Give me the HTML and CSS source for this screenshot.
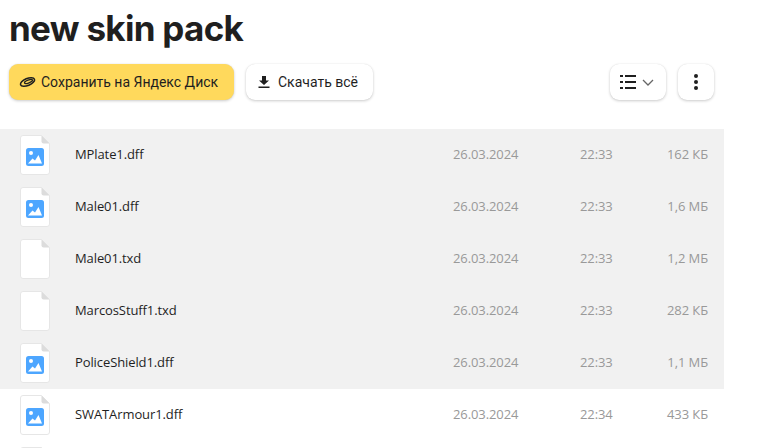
FILE: index.html
```html
<!DOCTYPE html>
<html lang="ru">
<head>
<meta charset="utf-8">
<title>new skin pack</title>
<link rel="stylesheet" href="styles.css">
</head>
<body>
<svg class="defs" width="0" height="0" aria-hidden="true">
  <symbol id="sheet" viewBox="0 0 30 40">
    <path d="M3 .5h18.500L29.500 8.500V37a2.500 2.500 0 0 1-2.500 2.500H3A2.500 2.500 0 0 1 .5 37V3A2.500 2.500 0 0 1 3 .5z" fill="#fff" stroke="#e6e6e6"/>
    <path d="M21.500 .5l8 8h-6a2 2 0 0 1-2-2z" fill="#dcdcdc"/>
  </symbol>
  <symbol id="pic" viewBox="0 0 30 40">
    <use href="#sheet" width="30" height="40"/>
    <rect x="6" y="13" width="18" height="18" rx="2.500" fill="#4da6ff"/>
    <circle cx="11" cy="18" r="2" fill="#fff"/>
    <path d="M8 28.500l4.500-5 2.500 2 3.500-5.500 3.500 8.500z" fill="#fff"/>
  </symbol>
</svg>
<header class="head">
  <h1 class="title">new skin pack</h1>
  <div class="toolbar">
    <button class="btn btn-save">
      <svg class="ico-disk" width="17" height="12" viewBox="0 0 17 12"><g fill="none" stroke="#1f1f1f"><ellipse cx="8.500" cy="6" rx="7.500" ry="3.500" transform="rotate(-22 8.500 6)" stroke-width="1.600"/><ellipse cx="9.500" cy="5.500" rx="4.200" ry="1.400" transform="rotate(-22 9.500 5.500)" stroke-width="1.400"/></g></svg>
      <span>Сохранить на Яндекс Диск</span>
    </button>
    <button class="btn btn-dl">
      <svg width="12" height="12" viewBox="0 0 12 12"><path d="M4 0h4v4.500h3L6 9 1 4.500h3zM0.500 10.500h11V12H.5z" fill="#1f1f1f"/></svg>
      <span>Скачать всё</span>
    </button>
    <div class="spacer"></div>
    <button class="btn btn-view">
      <svg width="16" height="14" viewBox="0 0 16 14"><path d="M0 0h3v2H0zM5 0h11v2H5zM0 6h3v2H0zM5 6h11v2H5zM0 12h3v2H0zM5 12h11v2H5z" fill="#1f1f1f"/></svg>
      <svg width="12" height="7" viewBox="0 0 12 7"><path d="M1 1l5 5 5-5" fill="none" stroke="#666" stroke-width="1.300"/></svg>
    </button>
    <button class="btn btn-more">
      <svg width="4" height="16" viewBox="0 0 4 16"><circle cx="2" cy="2" r="2" fill="#1f1f1f"/><circle cx="2" cy="8" r="2" fill="#1f1f1f"/><circle cx="2" cy="14" r="2" fill="#1f1f1f"/></svg>
    </button>
  </div>
</header>
<main class="list">
  <div class="row sel"><svg class="ficon"><use href="#pic"/></svg><span class="name">MPlate1.dff</span><span class="date">26.03.2024</span><span class="time">22:33</span><span class="size">162 КБ</span></div>
  <div class="row sel"><svg class="ficon"><use href="#pic"/></svg><span class="name">Male01.dff</span><span class="date">26.03.2024</span><span class="time">22:33</span><span class="size">1,6 МБ</span></div>
  <div class="row sel"><svg class="ficon"><use href="#sheet" width="30" height="40"/></svg><span class="name">Male01.txd</span><span class="date">26.03.2024</span><span class="time">22:33</span><span class="size">1,2 МБ</span></div>
  <div class="row sel"><svg class="ficon"><use href="#sheet" width="30" height="40"/></svg><span class="name">MarcosStuff1.txd</span><span class="date">26.03.2024</span><span class="time">22:33</span><span class="size">282 КБ</span></div>
  <div class="row sel"><svg class="ficon"><use href="#pic"/></svg><span class="name">PoliceShield1.dff</span><span class="date">26.03.2024</span><span class="time">22:33</span><span class="size">1,1 МБ</span></div>
  <div class="row"><svg class="ficon"><use href="#pic"/></svg><span class="name">SWATArmour1.dff</span><span class="date">26.03.2024</span><span class="time">22:34</span><span class="size">433 КБ</span></div>
  <div class="row"><svg class="ficon"><use href="#sheet" width="30" height="40"/></svg></div>
</main>
</body>
</html>
```
FILE: styles.css
```css
html, body { margin: 0; height: 448px; overflow: hidden; background: #fff; }
body { font-family: "Open Sans", Roboto, sans-serif; color: #1f1f1f; }
.defs { position: absolute; }
.head { width: 724px; }
.title { margin: 0; padding: 6px 0 0 9px; height: 58px; box-sizing: border-box; font-family: Inter, sans-serif; font-size: 35px; line-height: 44px; font-weight: 700; letter-spacing: -0.7px; }
.toolbar { display: flex; gap: 12px; padding: 6px 10px 0 9px; height: 71px; box-sizing: border-box; align-items: flex-start; }
.spacer { flex: 1; }
.btn { display: flex; align-items: center; height: 36px; border: 0; border-radius: 9px; background: #fff; box-shadow: 0 1px 3px rgba(0,0,0,.2), 0 0 1px rgba(0,0,0,.1); font: 14px/18px Roboto, sans-serif; color: #1f1f1f; padding: 0; }
.btn-save { width: 225px; background: #ffd95c; padding-left: 10px; gap: 5px; }
.btn-dl { width: 127px; padding-left: 12px; gap: 8px; }
.btn-view { width: 56px; padding-left: 10px; gap: 6px; }
.btn-more { width: 36px; justify-content: center; }
.list { width: 724px; }
.row { display: flex; align-items: center; height: 52px; padding-left: 20px; box-sizing: border-box; font-size: 13px; letter-spacing: -0.1px; }
.row span { padding-bottom: 2px; }
.sel { background: #f1f1f1; }
.ficon { width: 30px; height: 40px; flex: none; margin-right: 25px; }
.name { width: 378px; }
.date { width: 127px; color: #999; }
.time { width: 60px; color: #999; }
.size { width: 68px; color: #999; text-align: right; }
```
